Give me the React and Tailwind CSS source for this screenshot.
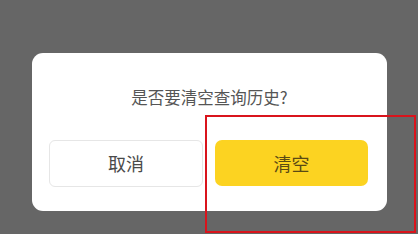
const App = () => {
  return (
    <div className="relative w-[418px] h-[234px] overflow-hidden bg-[#666666] font-['Noto_Sans_CJK_SC','Noto_Sans',sans-serif]">
      <div className="ml-[32px] mt-[53px] w-[355px] bg-white rounded-[11px] pt-[32px] pb-[24px] px-[17px]">
        <p className="text-center text-[16.5px] leading-[24px] text-[#555555] m-0">是否要清空查询历史?</p>
        <div className="mt-[31px] flex gap-[12px]">
          <button className="w-[154px] h-[47px] rounded-[6px] border border-[#e6e6e6] bg-white text-[18px] text-[#4a4a4a]">
            取消
          </button>
          <button className="w-[153px] h-[46px] rounded-[7px] bg-[#fcd321] text-[18px] text-[#5a4a14]">
            清空
          </button>
        </div>
      </div>
      {/* annotation box */}
      <div className="absolute left-[205px] top-[115px] w-[211px] h-[118px] border-2 border-[#d9141c]" />
    </div>
  )
}

export default App
